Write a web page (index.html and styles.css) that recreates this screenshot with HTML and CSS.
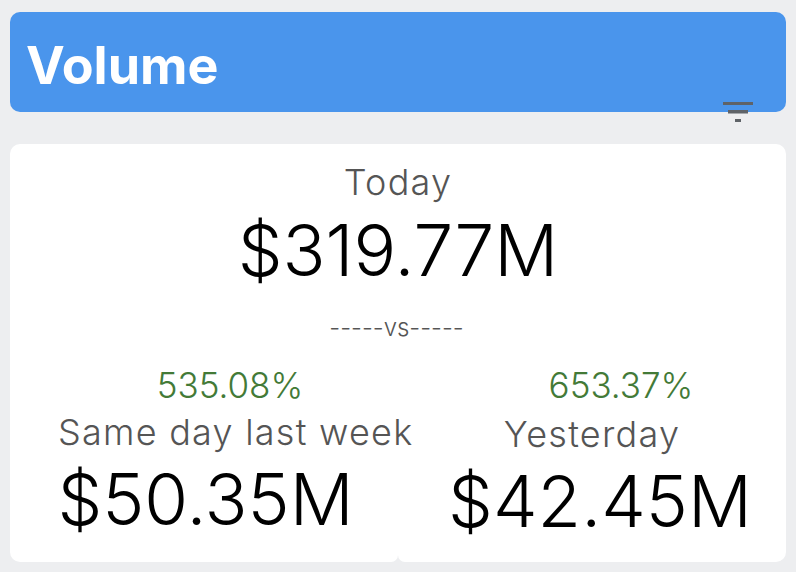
FILE: index.html
```html
<!DOCTYPE html>
<html>
<head>
    <link rel="stylesheet" href="styles.css">
</head>
<body>
    <div class="head">
        <div class="title">Volume</div>
        <svg class="filter" width="30" height="20" viewBox="0 0 30 20">
            <rect x="0" y="0" width="30" height="3" fill="#5f6368"/>
            <rect x="5" y="8" width="20" height="3.5" fill="#5f6368"/>
            <rect x="12" y="17" width="6" height="3" fill="#5f6368"/>
        </svg>
    </div>
    <div class="card">
        <div class="today">
            <div class="label">Today</div>
            <div class="amount">$319.77M</div>
            <div class="vs">-----vs-----</div>
        </div>
        <div class="rowcontainer">
            <div class="tile tile_week">
                <div class="pct pct_week">535.08%</div>
                <div class="label label_week">Same day last week</div>
                <div class="amount amount_week">$50.35M</div>
            </div>
            <div class="tile tile_yesterday">
                <div class="pct pct_yesterday">653.37%</div>
                <div class="label label_yesterday">Yesterday</div>
                <div class="amount amount_yesterday">$42.45M</div>
            </div>
        </div>
    </div>
</body>
</html>
```
FILE: styles.css
```css
body {
    margin: 0;
    height: 572px;
    overflow: hidden;
    background-color: #edeef0;
    padding: 12px 10px 10px;
    box-sizing: border-box;
    display: flex;
    flex-direction: column;
    font-family: Inter, sans-serif;
}
.head {
    position: relative;
    height: 100px;
    flex: none;
    background-color: #4a95ec;
    border-radius: 10px;
    padding: 23px 16px 0;
    box-sizing: border-box;
}
.title {
    font-size: 52px;
    line-height: 62px;
    font-weight: 700;
    color: #fff;
}
.filter {
    position: absolute;
    left: 713px;
    top: 90px;
}
.card {
    margin-top: 32px;
    flex: 1;
    display: flex;
    flex-direction: column;
}
.today {
    text-align: center;
    padding-top: 17px;
    background-color: #fff;
    border-radius: 10px 10px 0 0;
}
.label {
    font-size: 36px;
    line-height: 42px;
    font-weight: 300;
    letter-spacing: 1.25px;
    color: #555;
}
.amount {
    font-size: 71px;
    line-height: 94px;
    font-weight: 300;
    color: #000;
}
.vs {
    font-size: 24px;
    line-height: 30px;
    font-weight: 300;
    color: #555;
    margin-top: 16px;
    padding-right: 3px;
    padding-bottom: 21px;
}
.rowcontainer {
    display: flex;
    flex: 1;
}
.tile {
    width: 50%;
    text-align: center;
    background-color: #fff;
}
.tile .amount {
    margin-top: -1px;
}
.tile_week {
    position: relative;
    z-index: 1;
    border-radius: 0 0 7px 10px;
}
.tile_yesterday {
    border-radius: 0 0 10px 7px;
}
.pct {
    font-size: 35px;
    line-height: 44px;
    font-weight: 300;
    color: #437a37;
    padding-bottom: 3px;
    margin-top: -1px;
}
.pct_week {
    padding-left: 52px;
}
.label_week {
    text-align: left;
    white-space: nowrap;
    padding-left: 48px;
    margin-top: 1px;
}
.amount_week {
    padding-left: 3px;
}
.pct_yesterday {
    padding-left: 58px;
}
.label_yesterday {
    padding-top: 3px;
}
.amount_yesterday {
    padding-left: 16px;
}
```
